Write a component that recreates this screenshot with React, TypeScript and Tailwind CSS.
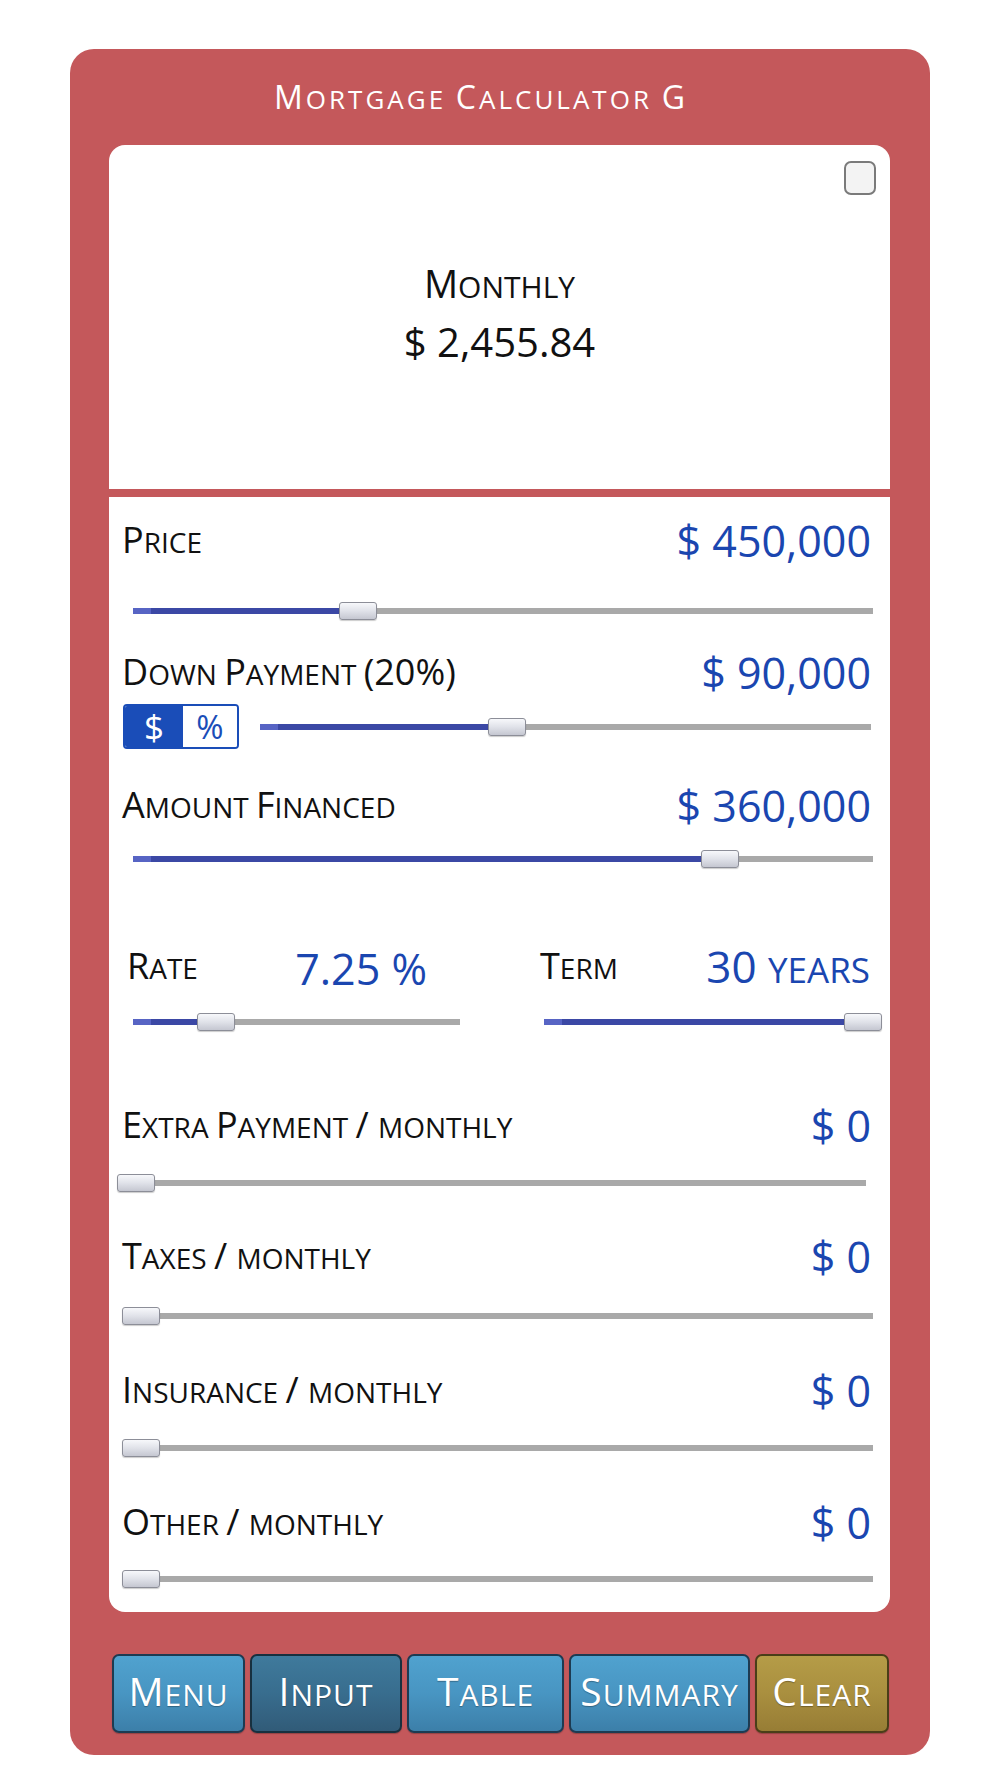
import React from 'react';

function SC({ text, big, small }: { text: string; big: string; small: string }) {
  const runs: { s: boolean; t: string }[] = [];
  for (const ch of text) {
    const lower = ch !== ch.toUpperCase();
    const s = ch === ' ' ? (runs.length ? runs[runs.length - 1].s : false) : lower;
    const last = runs[runs.length - 1];
    if (last && last.s === s) last.t += ch.toUpperCase();
    else runs.push({ s, t: ch.toUpperCase() });
  }
  return (
    <>
      {runs.map((r, i) => (
        <span key={i} className={r.s ? small : big}>
          {r.t}
        </span>
      ))}
    </>
  );
}

function Label({ text }: { text: string }) {
  return (
    <span className="leading-none text-[#111] whitespace-pre">
      <SC text={text} big="text-[36px]" small="text-[28px]" />
    </span>
  );
}

function Value({ children }: { children: React.ReactNode }) {
  return <span className="text-[43px] leading-none text-[#1a46b0] whitespace-pre">{children}</span>;
}

function Slider({ thumb, cls }: { thumb: number; cls: string }) {
  return (
    <div className={`relative h-[18px] shrink-0 ${cls}`}>
      <div className="absolute left-0 right-0 top-[6px] h-[6px] bg-[#a9a9a9]" />
      {thumb > 0 && (
        <div className="absolute left-0 top-[6px] h-[6px] bg-[#3b48a5] flex" style={{ width: thumb + 4 }}>
          <div className="w-[18px] h-full bg-[#5764c4]" />
        </div>
      )}
      <div
        className="absolute top-0 h-[18px] w-[38px] rounded-[3px] border border-[#8c8e98] bg-linear-to-b from-[#f7f8fb] via-[#e0e2e9] to-[#c5c7d1] shadow-[0_1px_1px_rgba(0,0,0,0.2)]"
        style={{ left: thumb }}
      />
    </div>
  );
}

function Row({ label, value, cls }: { label: string; value: React.ReactNode; cls: string }) {
  return (
    <div className={`flex items-center justify-between h-[52px] pl-[13px] pr-[19px] ${cls}`}>
      <Label text={label} />
      <Value>{value}</Value>
    </div>
  );
}

function Btn({ text, w, tone }: { text: string; w: string; tone: 'blue' | 'dark' | 'gold' }) {
  const toneCls =
    tone === 'blue'
      ? 'border-[#1d3b52] bg-linear-to-b from-[#50a2cf] via-[#4895c2] to-[#3c7fa9]'
      : tone === 'dark'
      ? 'border-[#17303f] bg-linear-to-b from-[#3f7a9c] via-[#386d8e] to-[#315b78]'
      : 'border-[#4a3e18] bg-linear-to-b from-[#b59c47] via-[#a98f3f] to-[#977d35]';
  return (
    <div
      className={`${w} h-[79px] rounded-[7px] border-2 ${toneCls} flex items-center justify-center pb-[6px] text-white font-medium tracking-[1px] leading-none [text-shadow:0_1px_1px_rgba(0,0,0,0.3)] shadow-[0_1px_1px_rgba(0,0,0,0.25)]`}
    >
      <span className="whitespace-pre">
        <SC text={text} big="text-[39px]" small="text-[30px]" />
      </span>
    </div>
  );
}

export default function App() {
  return (
    <div className="w-[1000px] h-[1778px] bg-white pt-[49px] font-['Open_Sans',sans-serif]">
      <div className="ml-[70px] w-[860px] h-[1706px] rounded-[24px] bg-[#c4585b] flex flex-col">
        <div className="h-[96px] flex items-center justify-center pr-[38px]">
          <span className="text-white tracking-[3px] leading-none font-medium whitespace-pre">
            <SC text="Mortgage Calculator G" big="text-[32px]" small="text-[26px]" />
          </span>
        </div>

        <div className="ml-[39px] w-[781px] h-[1467px] rounded-[16px] bg-white overflow-hidden flex flex-col">
          <div className="relative h-[344px] flex flex-col items-center pt-[114px] text-[#111]">
            <div className="h-[48px] flex items-center">
              <span className="leading-none whitespace-pre">
                <SC text="Monthly" big="text-[38px]" small="text-[30px]" />
              </span>
            </div>
            <div className="h-[48px] mt-[11px] flex items-center text-[40px] leading-none">$ 2,455.84</div>
            <div className="absolute top-[16px] right-[14px] w-[32px] h-[34px] rounded-[7px] border-2 border-[#7a7a7a] bg-[#f3f3f3]" />
          </div>
          <div className="h-[8px] bg-[#c4585b]" />

          <div className="flex flex-col">
            <Row cls="mt-[17px]" label="Price" value="$ 450,000" />
            <div className="flex mt-[36px]">
              <Slider cls="ml-[24px] w-[740px]" thumb={206} />
            </div>

            <Row cls="mt-[26px]" label="Down Payment (20%)" value="$ 90,000" />
            <div className="flex items-center h-[45px] mt-[6px] pl-[14px]">
              <div className="flex h-[45px] w-[116px] rounded-[4px] border-2 border-[#1a4db8] overflow-hidden leading-none">
                <div className="w-[58px] bg-[#1a4db8] text-white text-[35px] flex items-center justify-center">$</div>
                <div className="flex-1 bg-white text-[#1a4db8] text-[33px] flex items-center justify-center">%</div>
              </div>
              <Slider cls="ml-[21px] w-[611px]" thumb={228} />
            </div>

            <Row cls="mt-[30px]" label="Amount Financed" value="$ 360,000" />
            <div className="flex mt-[19px]">
              <Slider cls="ml-[24px] w-[740px]" thumb={568} />
            </div>

            <div className="flex h-[52px] mt-[72px]">
              <div className="ml-[18px] w-[300px] flex items-center justify-between">
                <Label text="Rate" />
                <span className="pt-[6px]">
                  <Value>7.25 %</Value>
                </span>
              </div>
              <div className="ml-[113px] w-[330px] flex items-center justify-between">
                <Label text="Term" />
                <Value>
                  <SC text="30 years" big="text-[44px]" small="text-[35px]" />
                </Value>
              </div>
            </div>
            <div className="flex mt-[21px]">
              <Slider cls="ml-[24px] w-[327px]" thumb={64} />
              <Slider cls="ml-[84px] w-[336px]" thumb={300} />
            </div>

            <Row cls="mt-[68px]" label="Extra Payment / monthly" value="$ 0" />
            <div className="flex mt-[23px]">
              <Slider cls="ml-[8px] w-[749px]" thumb={0} />
            </div>

            <Row cls="mt-[38px]" label="Taxes / monthly" value="$ 0" />
            <div className="flex mt-[25px]">
              <Slider cls="ml-[13px] w-[751px]" thumb={0} />
            </div>

            <Row cls="mt-[39px]" label="Insurance / monthly" value="$ 0" />
            <div className="flex mt-[23px]">
              <Slider cls="ml-[13px] w-[751px]" thumb={0} />
            </div>

            <Row cls="mt-[39px]" label="Other / monthly" value="$ 0" />
            <div className="flex mt-[22px]">
              <Slider cls="ml-[13px] w-[751px]" thumb={0} />
            </div>
          </div>
        </div>

        <div className="flex gap-[5px] ml-[42px] mt-[42px]">
          <Btn w="w-[133px]" tone="blue" text="Menu" />
          <Btn w="w-[152px]" tone="dark" text="Input" />
          <Btn w="w-[157px]" tone="blue" text="Table" />
          <Btn w="w-[181px]" tone="blue" text="Summary" />
          <Btn w="w-[134px]" tone="gold" text="Clear" />
        </div>
      </div>
    </div>
  );
}
